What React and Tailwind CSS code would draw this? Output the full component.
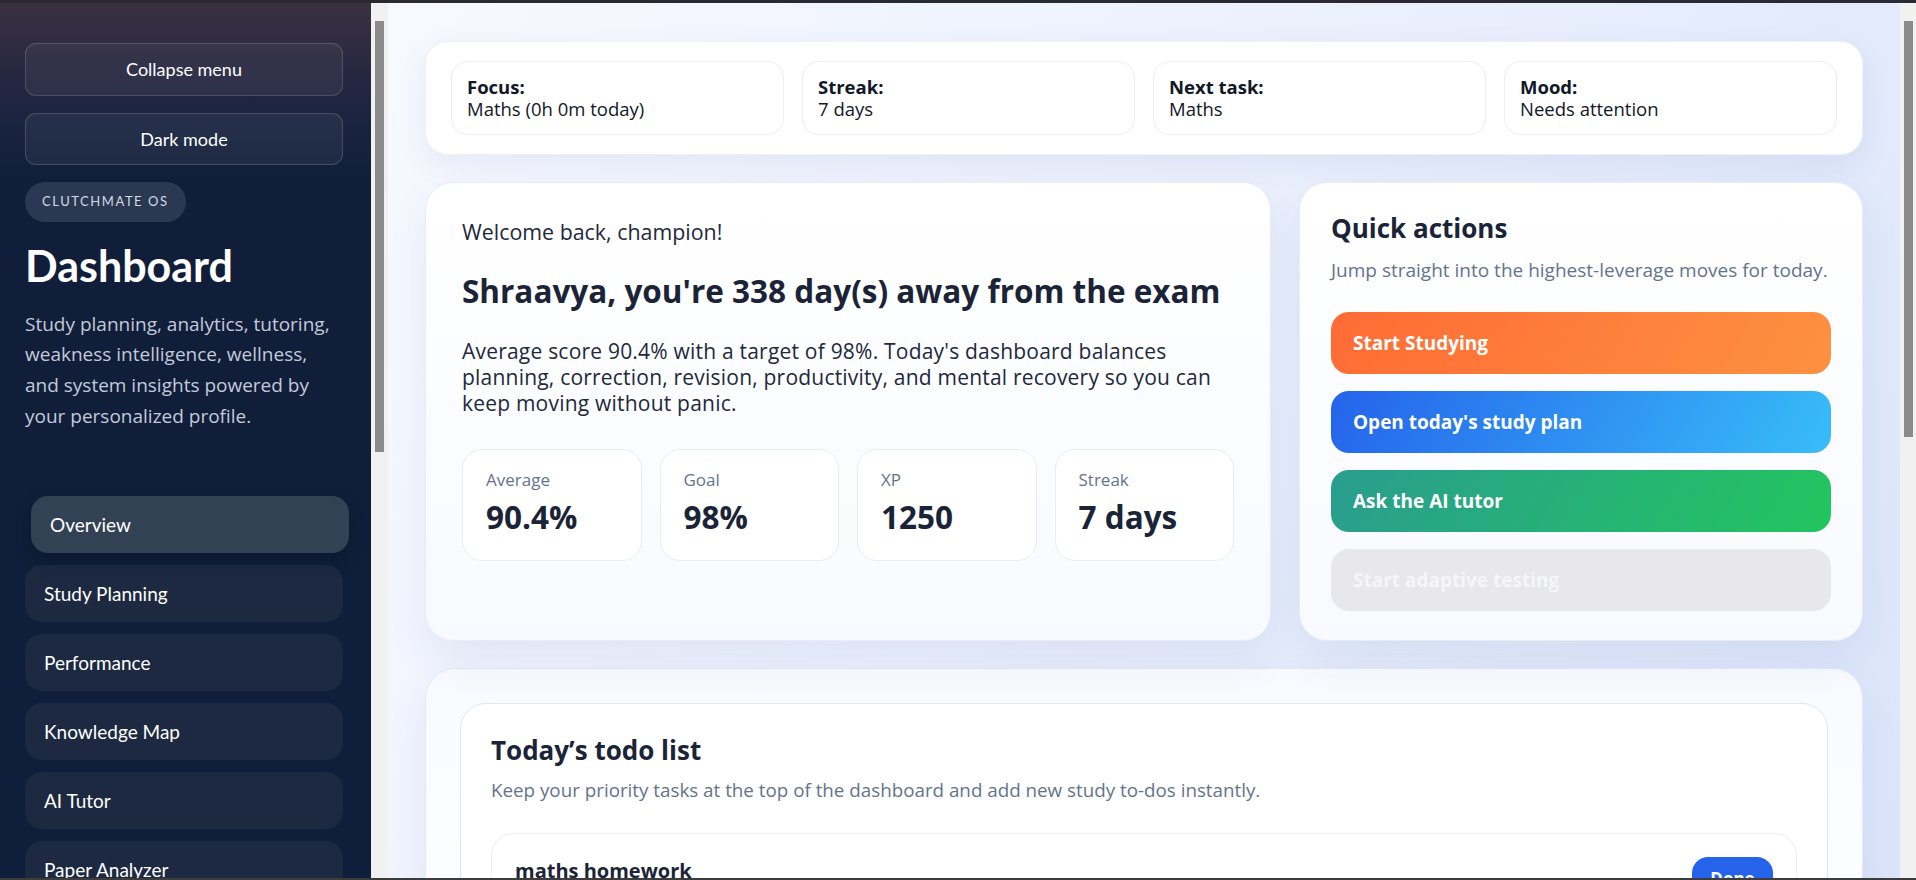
import { useState } from "react";

const navItems = [
  "Overview",
  "Study Planning",
  "Performance",
  "Knowledge Map",
  "AI Tutor",
  "Paper Analyzer",
  "Wellness",
  "Insights",
];

const statusItems = [
  { label: "Focus:", value: "Maths (0h 0m today)" },
  { label: "Streak:", value: "7 days" },
  { label: "Next task:", value: "Maths" },
  { label: "Mood:", value: "Needs attention" },
];

const stats = [
  { label: "Average", value: "90.4%" },
  { label: "Goal", value: "98%" },
  { label: "XP", value: "1250" },
  { label: "Streak", value: "7 days" },
];

const actions = [
  { label: "Start Studying", cls: "bg-[linear-gradient(120deg,#ff6b35,#fd9140)] text-white" },
  { label: "Open today's study plan", cls: "bg-[linear-gradient(120deg,#2563eb,#38bdf8)] text-white" },
  { label: "Ask the AI tutor", cls: "bg-[linear-gradient(120deg,#2a9d8f,#22c55e)] text-white" },
  { label: "Start adaptive testing", cls: "bg-[#e7e7ec] text-[#f6f6f8]" },
];

export default function App() {
  const [active, setActive] = useState("Overview");

  return (
    <div className="h-screen w-full flex flex-col overflow-hidden bg-[#2b2a33] font-['Open_Sans',sans-serif]">
      <div className="h-[3px] shrink-0 bg-[#2b2a33]" />

      <div className="flex flex-1 min-h-0">
        {/* Sidebar */}
        <aside className="w-[371px] shrink-0 overflow-hidden bg-[linear-gradient(180deg,#3a3140_0px,#272741_70px,#1a2440_120px,#101e3a_180px,#0f1e3a_100%)] pl-[25px] pr-[28px] pt-[40px] font-['Lato',sans-serif]">
          <button className="w-full h-[53px] rounded-[11px] border border-white/15 bg-white/5 text-[18px] text-white">
            Collapse menu
          </button>
          <button className="mt-[17px] w-full h-[52px] rounded-[11px] border border-white/15 bg-white/5 text-[18px] text-white">
            Dark mode
          </button>
          <div className="mt-[17px] inline-flex h-[40px] items-center rounded-full bg-[#2a3852] px-[17px] text-[13px] tracking-[0.12em] text-[#d3dae6]">
            CLUTCHMATE OS
          </div>
          <h1 className="mt-[18px] text-[43px] leading-[1.2] font-bold text-white">Dashboard</h1>
          <p className="mt-[17px] font-['Open_Sans',sans-serif] text-[19px] leading-[30.7px] text-[#c3cad8]">
            Study planning, analytics, tutoring, weakness intelligence, wellness, and system insights powered by your
            personalized profile.
          </p>

          <nav className="mt-[65px] flex flex-col gap-[12px]">
            {navItems.map((item) => (
              <button
                key={item}
                onClick={() => setActive(item)}
                className={`h-[57px] w-full rounded-[17px] pl-[19px] text-left text-[19px] text-white ${
                  active === item ? "translate-x-[6px] bg-[#334155] shadow-[0_8px_20px_rgba(0,0,0,0.2)]" : "bg-[#1c2941]"
                }`}
              >
                {item}
              </button>
            ))}
          </nav>
        </aside>

        {/* Sidebar scrollbar */}
        <div className="w-[17px] shrink-0 bg-[#f1f1f1] pt-[18px]">
          <div className="ml-[4px] h-[431px] w-[9px] bg-[#8a8a8a]" />
        </div>

        {/* Main */}
        <main className="flex-1 min-w-0 overflow-hidden bg-[linear-gradient(120deg,#f7f9ff_0%,#edf2fd_40%,#dbe5fa_100%)] px-[37px] pt-[38px]">
          {/* Status strip */}
          <div className="grid grid-cols-4 gap-[18px] rounded-[22px] border border-[#edf0f6] bg-white px-[25px] py-[19px] shadow-[0_10px_30px_rgba(40,70,140,0.08)]">
            {statusItems.map((s) => (
              <div key={s.label} className="rounded-[16px] border border-[#eceef3] bg-white px-[15px] py-[14px] text-[18.5px] leading-[22px] text-[#111827]">
                <div className="font-bold">{s.label}</div>
                <div>{s.value}</div>
              </div>
            ))}
          </div>

          {/* Hero + quick actions */}
          <div className="mt-[27px] grid grid-cols-[3fr_2fr] gap-[28px]">
            <section className="rounded-[28px] border border-[#e7ecf6] bg-[linear-gradient(180deg,#ffffff,#f8faff)] px-[36px] pt-[35px] shadow-[0_18px_40px_rgba(40,70,140,0.08)]">
              <p className="text-[21.4px] leading-[28px] text-[#1e293b]">Welcome back, champion!</p>
              <h2 className="mt-[27px] text-[31.5px] leading-[36px] font-bold text-[#1b2437]">
                Shraavya, you're 338 day(s) away from the exam
              </h2>
              <p className="mt-[29px] text-[21px] leading-[26px] tracking-[0.01em] text-[#1e293b]">
                Average score 90.4% with a target of 98%. Today's dashboard balances planning, correction, revision,
                productivity, and mental recovery so you can keep moving without panic.
              </p>
              <div className="mt-[33px] grid grid-cols-4 gap-[18px]">
                {stats.map((s) => (
                  <div key={s.label} className="h-[112px] rounded-[20px] border border-[#e8ecf3] bg-white pl-[23px] pt-[18px]">
                    <div className="text-[17px] leading-[24px] text-[#64748b]">{s.label}</div>
                    <div className="mt-[7px] text-[31.5px] leading-[36px] font-bold text-[#1b2437]">{s.value}</div>
                  </div>
                ))}
              </div>
            </section>

            <section className="rounded-[28px] border border-[#e7ecf6] bg-[linear-gradient(180deg,#ffffff,#f8faff)] px-[31px] pt-[29px] pb-[29px] shadow-[0_18px_40px_rgba(40,70,140,0.08)]">
              <h3 className="text-[26px] leading-[32px] font-bold text-[#1b2437]">Quick actions</h3>
              <p className="mt-[13px] text-[19px] leading-[26px] text-[#64748b]">
                Jump straight into the highest-leverage moves for today.
              </p>
              <div className="mt-[29px] flex flex-col gap-[17px]">
                {actions.map((a) => (
                  <button key={a.label} className={`h-[62px] rounded-[18px] pl-[22px] text-left text-[19px] font-bold ${a.cls}`}>
                    {a.label}
                  </button>
                ))}
              </div>
            </section>
          </div>

          {/* Todo */}
          <section className="mt-[27px] rounded-[30px] border border-[#e3e9f6] bg-[linear-gradient(180deg,#f8faff,#ffffff)] p-[34px] shadow-[0_18px_40px_rgba(40,70,140,0.08)]">
            <div className="rounded-[26px] border border-[#dfe6f3] bg-white px-[30px] pt-[31px] pb-[30px]">
              <h3 className="text-[26px] leading-[30px] font-bold text-[#1b2437]">Today’s todo list</h3>
              <p className="mt-[12px] text-[18.8px] leading-[26px] text-[#64748b]">
                Keep your priority tasks at the top of the dashboard and add new study to-dos instantly.
              </p>
              <div className="mt-[30px] flex items-start justify-between rounded-[22px] border border-[#eceef3] bg-white px-[23px] pt-[23px] pb-[21px]">
                <div>
                  <div className="text-[20px] leading-[28px] font-bold text-[#1b2437]">maths homework</div>
                  <div className="mt-[4px] text-[16px] text-[#64748b]">Maths · due today</div>
                </div>
                <button className="h-[44px] w-[81px] rounded-[16px] bg-[#2563eb] text-[17px] font-bold text-white">
                  Done
                </button>
              </div>
            </div>
          </section>
        </main>

        {/* Page scrollbar */}
        <div className="w-[16px] shrink-0 bg-[#f1f1f1] pt-[18px]">
          <div className="ml-[4px] h-[416px] w-[9px] bg-[#8a8a8a]" />
        </div>
      </div>

      <div className="h-[2px] shrink-0 bg-[#3c3c3c]" />
    </div>
  );
}
